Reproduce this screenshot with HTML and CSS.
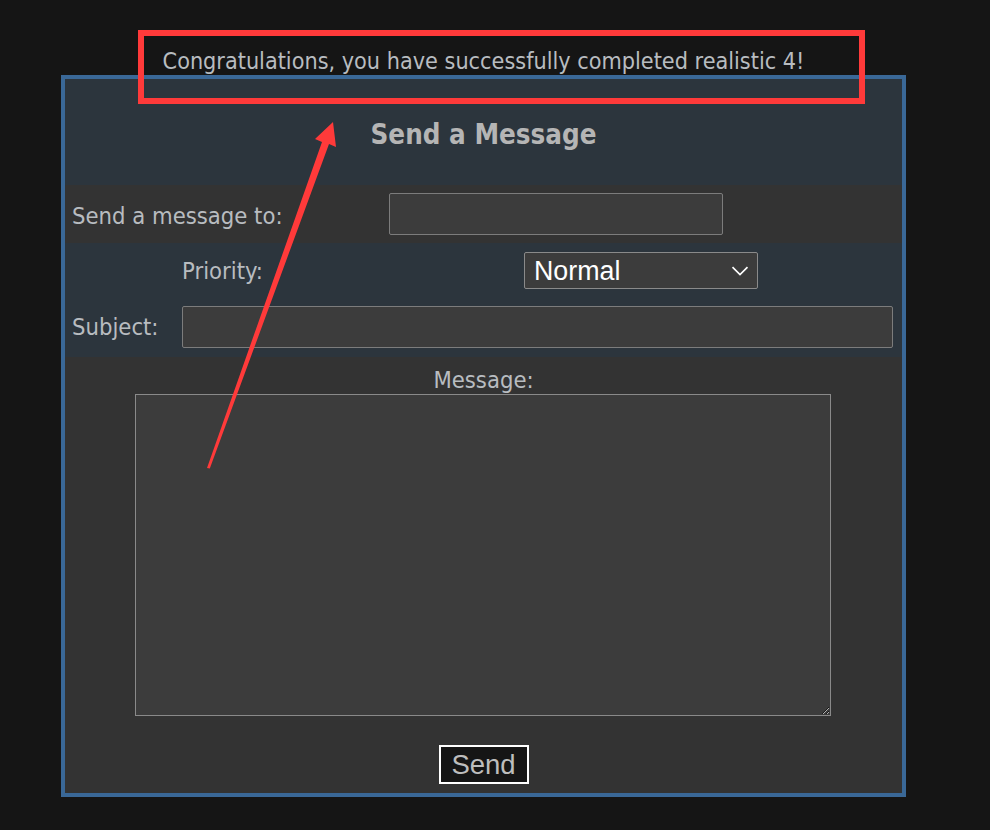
FILE: index.html
```html
<!DOCTYPE html>
<html>
<head>
<meta charset="utf-8">
<link rel="stylesheet" href="styles.css">
</head>
<body>
<div class="page">
  <div class="wrap">
    <div class="congrats">Congratulations, you have successfully completed realistic 4!</div>
    <div class="box">
      <div class="head">Send a Message</div>
      <div class="row row-to">
        <label class="lbl">Send a message to:</label>
        <div class="cell"><input class="inp inp-to" type="text"></div>
      </div>
      <div class="row-mid">
        <div class="row-prio">
          <label class="lbl center">Priority:</label>
          <div class="cell center">
            <div class="sel-wrap">
              <select class="sel"><option>Normal</option></select>
              <svg class="chev" width="18" height="10" viewBox="0 0 18 10"><path d="M1.5 1.2 L9 8.5 L16.5 1.2" fill="none" stroke="#ffffff" stroke-width="1.7"/></svg>
            </div>
          </div>
        </div>
        <div class="row-subj">
          <label class="lbl">Subject:</label>
          <input class="inp inp-subj" type="text">
        </div>
      </div>
      <div class="row-msg">
        <label class="lbl msg-lbl">Message:</label>
        <textarea class="ta"></textarea>
        <button class="send">Send</button>
      </div>
    </div>
  </div>
  <svg class="annot" width="990" height="830" viewBox="0 0 990 830">
    <rect x="141" y="33" width="721" height="68" fill="none" stroke="#ff3a3a" stroke-width="6"/>
    <polygon points="207,468 322,142 315,139 333,122 336,147 329,144 209.8,468.6" fill="#ff3a3a"/>
  </svg>
</div>
</body>
</html>
```
FILE: styles.css
```css
html, body {
  margin: 0;
  padding: 0;
  background: #151515;
}
.page {
  position: relative;
  width: 990px;
  height: 830px;
  overflow: hidden;
}
.wrap {
  width: 845px;
  margin-left: 61px;
  font-family: "DejaVu Sans Condensed", "DejaVu Sans", sans-serif;
  color: #b8bcc0;
}
.congrats {
  padding-top: 46px;
  height: 29px;
  line-height: 29px;
  text-align: center;
  font-size: 23.2px;
  color: #b8bcc0;
}
.box {
  border: 4px solid #3a6897;
  background: #333333;
}
.head {
  height: 106px;
  padding-top: 3px;
  background: #2c353d;
  display: flex;
  align-items: center;
  justify-content: center;
  font-weight: bold;
  font-size: 27.5px;
  color: #b5b5b5;
  box-sizing: border-box;
}
.row {
  display: grid;
  grid-template-columns: 315px 1fr;
  align-items: center;
}
.row-to {
  height: 58px;
  background: #333333;
}
.lbl {
  font-size: 23.6px;
  color: #b8bcc0;
}
.row-to .lbl {
  padding-left: 7px;
  padding-top: 3px;
}
.inp {
  box-sizing: border-box;
  height: 42px;
  background: #3c3c3c;
  border: 1px solid #7c7c7c;
  border-radius: 2px;
  outline: none;
  margin: 0;
}
.inp-to {
  width: 334px;
  margin-left: 9px;
  display: block;
}
.row-mid {
  background: #2c353d;
  padding: 9px 0 9px 0;
}
.row-prio {
  display: grid;
  grid-template-columns: 315px 1fr;
  align-items: center;
  height: 37px;
}
.center {
  text-align: center;
  display: flex;
  justify-content: center;
}
.sel-wrap {
  position: relative;
  width: 234px;
  height: 37px;
}
.sel {
  appearance: none;
  -webkit-appearance: none;
  box-sizing: border-box;
  width: 234px;
  height: 37px;
  background: #3c3c3c;
  border: 1px solid #8a8a8a;
  border-radius: 2px;
  color: #ffffff;
  font-family: "Liberation Sans", Arial, sans-serif;
  font-size: 26.8px;
  padding: 0 0 0 9px;
  margin: 0;
  outline: none;
}
.chev {
  position: absolute;
  right: 9px;
  top: 14px;
  pointer-events: none;
}
.row-subj {
  display: flex;
  align-items: center;
  margin-top: 17px;
  height: 42px;
}
.row-subj .lbl {
  padding-left: 7px;
  width: 110px;
  box-sizing: border-box;
}
.inp-subj {
  width: 711px;
  margin-left: 7px;
}
.row-msg {
  display: flex;
  flex-direction: column;
  align-items: center;
  padding: 10px 0 9px 0;
}
.msg-lbl {
  line-height: 26px;
  height: 26px;
}
.ta {
  box-sizing: border-box;
  width: 696px;
  height: 322px;
  margin-top: 1px;
  background: #3c3c3c;
  border: 1px solid #8a8a8a;
  border-radius: 0;
  outline: none;
  margin-right: 1px;
}
.send {
  box-sizing: border-box;
  margin-top: 29px;
  width: 90px;
  height: 39px;
  background: #151515;
  border: 2px solid #ffffff;
  border-radius: 0;
  color: #bdbdbd;
  font-family: "Liberation Sans", Arial, sans-serif;
  font-size: 27.5px;
  padding: 0;
}
.annot {
  position: absolute;
  left: 0;
  top: 0;
  pointer-events: none;
}
```
